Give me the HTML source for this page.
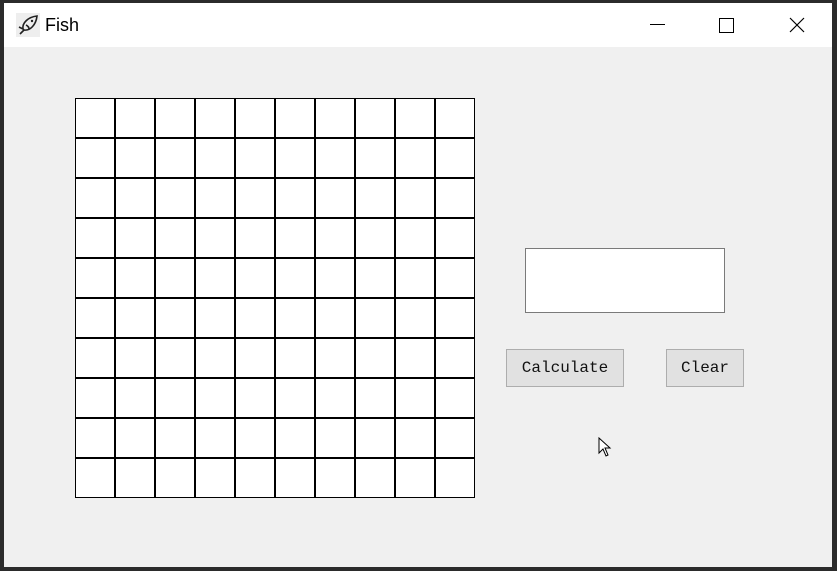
<!DOCTYPE html><html><head><style>
body{margin:0;width:837px;height:571px;background:#2b2b2b;position:relative;overflow:hidden;font-family:"Liberation Sans",sans-serif}
#win{position:absolute;left:4px;top:3px;width:828px;height:564px;background:#f0f0f0}
#title{position:absolute;left:0;top:0;width:828px;height:44px;background:#fff}
#grid{position:absolute;left:71px;top:95px;width:400px;height:400px;display:grid;grid-template-columns:repeat(10,40px)}
#grid div{width:38px;height:38px;border:1px solid #000;background:#fff}
.btn{position:absolute;background:#e1e1e1;border:1px solid #adadad;box-sizing:border-box;font-family:"Liberation Mono","Noto Sans CJK SC",monospace;font-size:16px;text-align:center;color:#111}
</style></head><body><div id="win">
<div id="title">
<svg style="position:absolute;left:12px;top:10px" width="24" height="24" viewBox="0 0 24 24"><rect width="24" height="24" fill="#eee"/><path d="M7 16 C6 10 12 4 21 3 C20 12 14 18 8 17 Z M8 17 L4 21 M7 16 L3 14 M10 12 C12 13 13 14 13 16" fill="none" stroke="#222" stroke-width="1.6"/><circle cx="16" cy="8" r="1.2" fill="#222"/></svg>
<div style="position:absolute;left:41px;top:12px;font-size:18px;color:#000">Fish</div>
<div style="position:absolute;left:646px;top:21px;width:15px;height:1px;background:#000"></div>
<div style="position:absolute;left:715px;top:15px;width:13px;height:13px;border:1px solid #000"></div>
<svg style="position:absolute;left:785px;top:14px" width="16" height="16"><path d="M1 1L15 15M15 1L1 15" stroke="#000" stroke-width="1.2"/></svg>
</div>
<div id="grid">
<div></div><div></div><div></div><div></div><div></div><div></div><div></div><div></div><div></div><div></div>
<div></div><div></div><div></div><div></div><div></div><div></div><div></div><div></div><div></div><div></div>
<div></div><div></div><div></div><div></div><div></div><div></div><div></div><div></div><div></div><div></div>
<div></div><div></div><div></div><div></div><div></div><div></div><div></div><div></div><div></div><div></div>
<div></div><div></div><div></div><div></div><div></div><div></div><div></div><div></div><div></div><div></div>
<div></div><div></div><div></div><div></div><div></div><div></div><div></div><div></div><div></div><div></div>
<div></div><div></div><div></div><div></div><div></div><div></div><div></div><div></div><div></div><div></div>
<div></div><div></div><div></div><div></div><div></div><div></div><div></div><div></div><div></div><div></div>
<div></div><div></div><div></div><div></div><div></div><div></div><div></div><div></div><div></div><div></div>
<div></div><div></div><div></div><div></div><div></div><div></div><div></div><div></div><div></div><div></div>
</div>
<div style="position:absolute;left:521px;top:245px;width:198px;height:63px;background:#fff;border:1px solid #7a7a7a"></div>
<div class="btn" style="left:502px;top:346px;width:118px;height:38px;line-height:36px">Calculate</div>
<div class="btn" style="left:662px;top:346px;width:78px;height:38px;line-height:36px">Clear</div>
<svg style="position:absolute;left:594px;top:434px" width="14" height="20"><path d="M1 1L1 16L5 12L8 19L10 18L7 11L12 11Z" fill="#fff" stroke="#000"/></svg>
</div></body></html>
